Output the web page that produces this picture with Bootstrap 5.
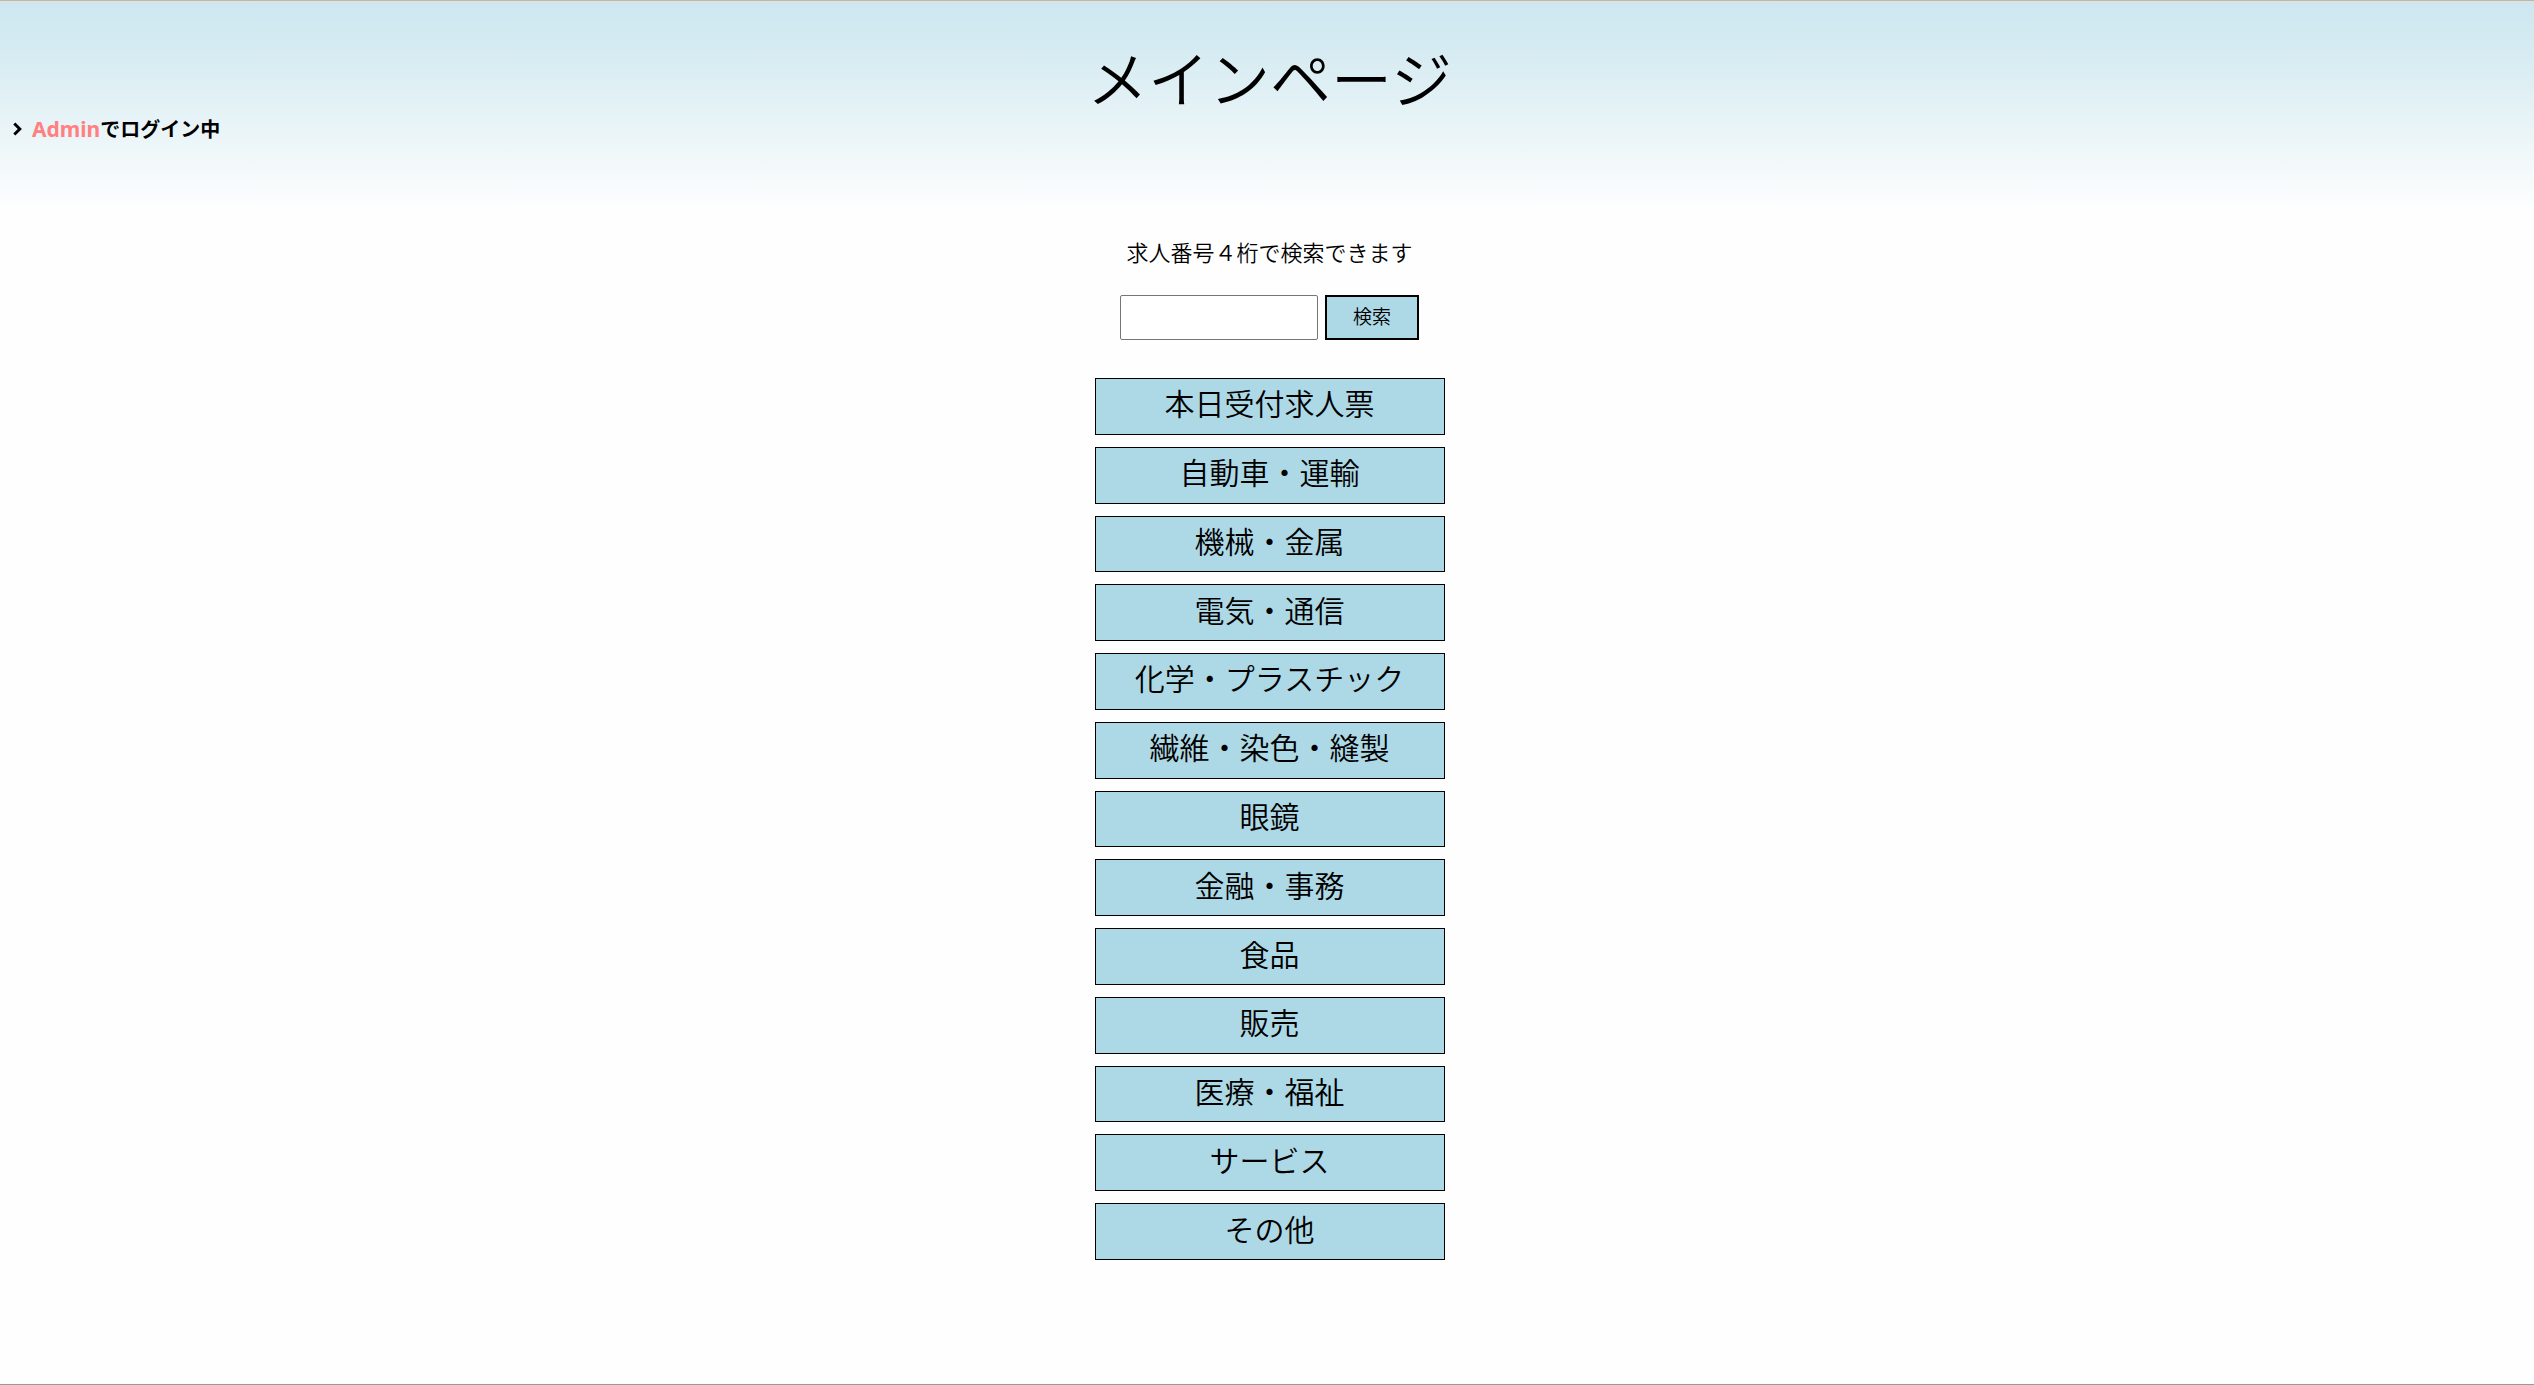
<!DOCTYPE html>
<html lang="ja">
<head>
<meta charset="utf-8">
<meta name="viewport" content="width=device-width, initial-scale=1">
<title>メインページ</title>
<link href="https://cdn.jsdelivr.net/npm/bootstrap@5.3.0/dist/css/bootstrap.min.css" rel="stylesheet">
<style>
body {
  font-family: "Noto Sans", "Noto Sans CJK JP", sans-serif;
  color: #000;
  border-top: 1px solid #d2b48c;
  border-bottom: 1px solid #999;
  background: #fefefe linear-gradient(#cde6f0, #d3eaf1 40px, #fefefe 212px) no-repeat;
  padding-left: 5px;
}
.page-title {
  font-family: "Noto Sans CJK JP", sans-serif;
  font-size: 61px;
  line-height: 72px;
  font-weight: 350;
  padding-top: 40px;
}
.login-state { height: 32px; font-size: 20px; line-height: 30px; padding-left: 8px; gap: 10px; }
.user-name { color: #ff8080; font-size: 21px; }
.jobs { font-family: "Noto Sans CJK JP", sans-serif; font-weight: 350; padding-top: 90px; }
.search-hint { font-size: 22px; line-height: 32px; margin-bottom: 28px; }
.search-form { gap: 7px; margin-bottom: 38px; }
.search-box { width: 198px; height: 45px; border: 1px solid #767676; border-radius: 2px; background: #fff; font-size: 19px; }
.search-btn { width: 94px; height: 45px; border: 2px solid #000; background: lightblue; color: #000; font-size: 19px; line-height: 28px; font-weight: 350; }
.category-list { width: 350px; height: 882px; gap: 12px; }
.category-link {
  border: 1px solid #000;
  background: lightblue;
  color: #000;
  font-size: 30px;
  line-height: 44px;
  padding-bottom: 8px;
}
.category-link:hover { background: #fff; }
</style>
<script src="https://cdn.jsdelivr.net/npm/bootstrap@5.3.0/dist/js/bootstrap.bundle.min.js"></script>
</head>
<body class="min-vh-100">
<header>
  <h1 class="page-title text-center mb-0">メインページ</h1>
  <div class="login-state d-flex align-items-center fw-bold">
    <svg width="9" height="14" viewBox="0 0 9 14" fill="none" stroke="#000" stroke-width="3" aria-hidden="true"><path d="M1.3 1.5 6.8 7 1.3 12.5"/></svg>
    <span><span class="user-name">Admin</span>でログイン中</span>
  </div>
</header>
<main class="jobs d-flex flex-column align-items-center">
  <label class="search-hint" for="job-no">求人番号４桁で検索できます</label>
  <form class="search-form d-flex">
    <input class="search-box px-2" type="text" id="job-no" maxlength="4">
    <button class="search-btn p-0 pb-1" type="submit">検索</button>
  </form>
  <nav class="category-list d-flex flex-column">
    <a class="category-link d-flex flex-fill align-items-center justify-content-center text-decoration-none" href="#">本日受付求人票</a>
    <a class="category-link d-flex flex-fill align-items-center justify-content-center text-decoration-none" href="#">自動車・運輸</a>
    <a class="category-link d-flex flex-fill align-items-center justify-content-center text-decoration-none" href="#">機械・金属</a>
    <a class="category-link d-flex flex-fill align-items-center justify-content-center text-decoration-none" href="#">電気・通信</a>
    <a class="category-link d-flex flex-fill align-items-center justify-content-center text-decoration-none" href="#">化学・プラスチック</a>
    <a class="category-link d-flex flex-fill align-items-center justify-content-center text-decoration-none" href="#">繊維・染色・縫製</a>
    <a class="category-link d-flex flex-fill align-items-center justify-content-center text-decoration-none" href="#">眼鏡</a>
    <a class="category-link d-flex flex-fill align-items-center justify-content-center text-decoration-none" href="#">金融・事務</a>
    <a class="category-link d-flex flex-fill align-items-center justify-content-center text-decoration-none" href="#">食品</a>
    <a class="category-link d-flex flex-fill align-items-center justify-content-center text-decoration-none" href="#">販売</a>
    <a class="category-link d-flex flex-fill align-items-center justify-content-center text-decoration-none" href="#">医療・福祉</a>
    <a class="category-link d-flex flex-fill align-items-center justify-content-center text-decoration-none" href="#">サービス</a>
    <a class="category-link d-flex flex-fill align-items-center justify-content-center text-decoration-none" href="#">その他</a>
  </nav>
</main>
</body>
</html>
